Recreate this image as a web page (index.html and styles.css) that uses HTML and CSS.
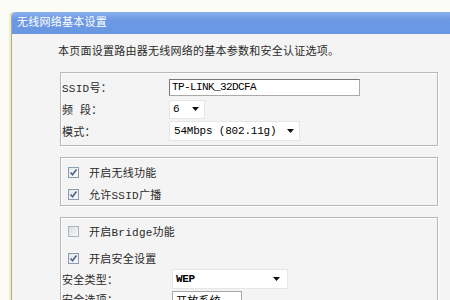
FILE: index.html
```html
<!DOCTYPE html>
<html lang="zh-CN">
<head>
    <meta charset="UTF-8">
    <title>无线网络基本设置</title>
    <link rel="stylesheet" href="styles.css">
</head>
<body>
    <div class="page">
        <div class="panel">
            <div class="panel-head">无线网络基本设置</div>
            <div class="panel-body">
                <p class="intro">本页面设置路由器无线网络的基本参数和安全认证选项。</p>

                <div class="group group-basic">
                    <div class="field">
                        <span class="label">SSID号：</span>
                        <div class="textbox">TP-LINK_32DCFA</div>
                    </div>
                    <div class="field">
                        <span class="label">频 段：</span>
                        <div class="select select-channel"><span>6</span><svg class="arrow" width="7" height="4" viewBox="0 0 7 4"><path d="M0 0h7L3.5 4z" fill="#111"/></svg></div>
                    </div>
                    <div class="field">
                        <span class="label">模式：</span>
                        <div class="select select-mode"><span>54Mbps (802.11g)</span><svg class="arrow" width="7" height="4" viewBox="0 0 7 4"><path d="M0 0h7L3.5 4z" fill="#111"/></svg></div>
                    </div>
                </div>

                <div class="group group-checks">
                    <div class="check-row">
                        <span class="box checked"><svg width="9" height="9" viewBox="0 0 9 9"><path d="M1.5 4.5l2 2.2L7.5 1.5" fill="none" stroke="#4f6389" stroke-width="1.6"/></svg></span>
                        <span>开启无线功能</span>
                    </div>
                    <div class="check-row">
                        <span class="box checked"><svg width="9" height="9" viewBox="0 0 9 9"><path d="M1.5 4.5l2 2.2L7.5 1.5" fill="none" stroke="#4f6389" stroke-width="1.6"/></svg></span>
                        <span>允许SSID广播</span>
                    </div>
                </div>

                <div class="group group-security">
                    <div class="check-row">
                        <span class="box"></span>
                        <span>开启Bridge功能</span>
                    </div>
                    <div class="check-row second">
                        <span class="box checked"><svg width="9" height="9" viewBox="0 0 9 9"><path d="M1.5 4.5l2 2.2L7.5 1.5" fill="none" stroke="#4f6389" stroke-width="1.6"/></svg></span>
                        <span>开启安全设置</span>
                    </div>
                    <div class="field wide">
                        <span class="label">安全类型：</span>
                        <div class="select select-type"><span>WEP</span><svg class="arrow" width="7" height="4" viewBox="0 0 7 4"><path d="M0 0h7L3.5 4z" fill="#111"/></svg></div>
                    </div>
                    <div class="field wide">
                        <span class="label">安全选项：</span>
                        <div class="select select-option"><span>开放系统</span></div>
                    </div>
                </div>
            </div>
        </div>
    </div>
</body>
</html>
```

FILE: styles.css
```css
body {
    margin: 0;
    background: #fbfbf7;
    font-family: 'Liberation Mono', 'Noto Sans CJK SC', monospace;
    font-size: 11px;
    letter-spacing: 0.25px;
    color: #2a2a2a;
    height: 300px;
    overflow: hidden;
}

.page {
    padding: 12px 0 0 11px;
}

.panel {
    background: #f4f4f4;
    border-left: 1px solid #b5ae88;
    border-top-left-radius: 4px;
    box-shadow: -2px 0 0 #f1ecca;
    height: 288px;
    overflow: hidden;
}

.panel-head {
    height: 22px;
    line-height: 22px;
    padding-left: 5px;
    color: #fff;
    background: linear-gradient(#8db1ef, #6d99e3 35%, #6a97e2);
    border-top-left-radius: 4px;
}

.panel-body {
    padding: 10px 12px 0 46px;
}

.intro {
    margin: 0 0 12px 0;
    line-height: 16px;
}

.group {
    margin-left: 2px;
    border: 1px solid #b8b8b8;
    box-shadow: 1px 1px 0 #fff, inset 1px 1px 0 #fff;
    margin-bottom: 11px;
}

.group-basic {
    padding: 3px 0 3px 1px;
}

.field {
    display: grid;
    grid-template-columns: 107px auto;
    align-items: center;
    height: 22px;
}

.field.wide {
    grid-template-columns: 110px auto;
    height: 20px;
}

.label {
    white-space: pre;
}

.textbox {
    width: 185px;
    height: 15px;
    line-height: 15px;
    padding: 0 2px;
    background: #fff;
    border: 1px solid #777;
    border-right-color: #aaa;
    border-bottom-color: #aaa;
    color: #000;
    letter-spacing: -0.6px;
}

.select {
    display: flex;
    align-items: center;
    justify-content: space-between;
    height: 18px;
    padding: 0 5px 0 3px;
    background: #fff;
    border: 1px solid #e6e6e6;
    color: #000;
    box-sizing: border-box;
}

.select-channel {
    width: 36px;
    height: 19px;
}

.select-mode {
    width: 131px;
    height: 20px;
    padding-left: 4px;
    letter-spacing: -0.2px;
}

.select-type {
    width: 116px;
    height: 20px;
    padding-right: 7px;
    font-weight: bold;
    letter-spacing: -0.3px;
}

.select-option {
    width: 70px;
    border-color: #a8a8a8;
    margin-top: 2px;
}

.group-checks {
    padding: 3px 0 0 1px;
}

.check-row {
    display: flex;
    align-items: center;
    height: 22px;
    padding-left: 6px;
}

.check-row.second {
    margin-top: 5px;
}

.group-security {
    padding: 2px 0 20px 1px;
}

.box {
    width: 9px;
    height: 9px;
    margin-right: 10px;
    border: 1px solid #a9b3c2;
    background: linear-gradient(135deg, #dcdcdc, #fafafa);
    display: flex;
    align-items: center;
    justify-content: center;
}

.box.checked {
    border-color: #8c9bb4;
    background: linear-gradient(135deg, #e4e7ec, #fafafa);
}
```
